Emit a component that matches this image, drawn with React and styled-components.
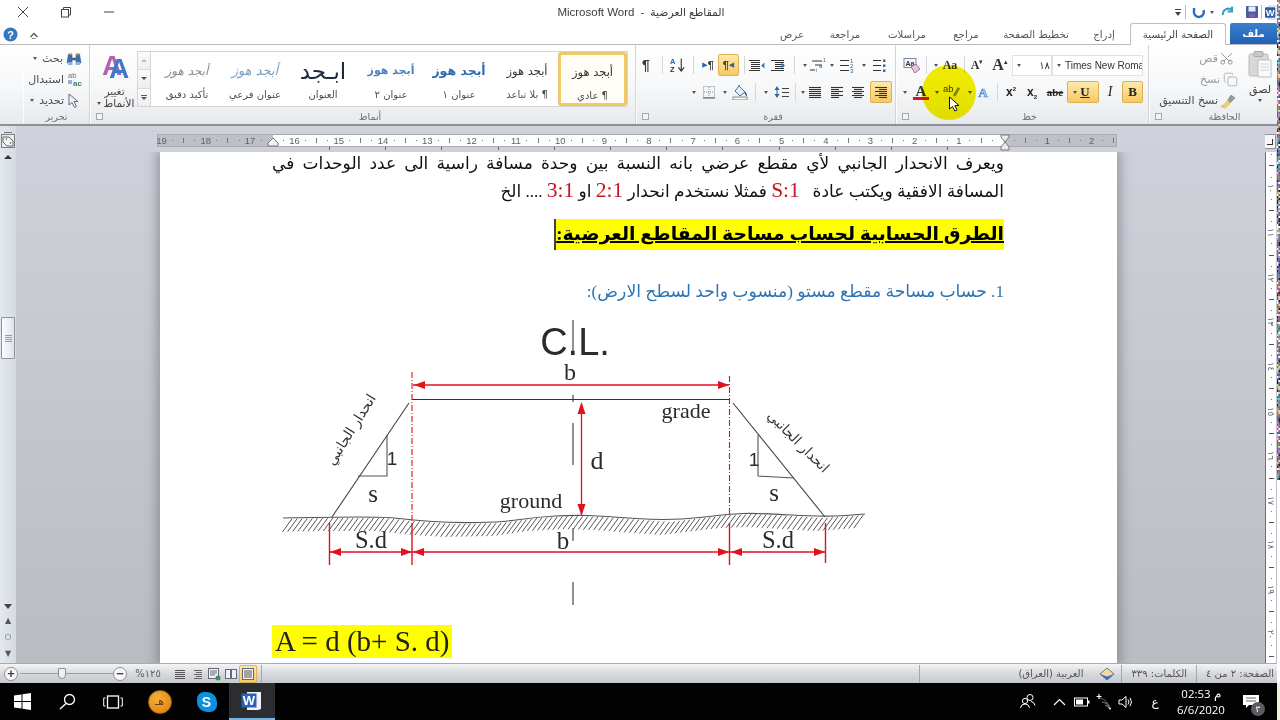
import React from 'react';
import styled, { createGlobalStyle } from 'styled-components';
import { Scissors, Copy } from 'lucide-react';

const Global = createGlobalStyle`
  html, body { margin: 0; padding: 0; background: #fff; }
  #root { width: 1280px; height: 720px; }
`;

const UI = `"DejaVu Sans", "Noto Sans", sans-serif`;
const SERIF = `"Liberation Serif", "DejaVu Sans", serif`;

const Shell = styled.div`
  position: relative; width: 1280px; height: 720px; overflow: hidden;
  display: flex; flex-direction: column; font-family: ${UI}; color: #444; background: #fff;
`;

/* ---------- title bar ---------- */
const TitleBar = styled.div`
  height: 24px; flex: none; display: grid; grid-template-columns: 1fr auto 1fr; align-items: center; background: #fff;
`;
const WinControls = styled.div`display: flex; padding-left: 1px;`;
const WinBtn = styled.div`width: 43px; display: flex; justify-content: center; align-items: center;`;
const TitleText = styled.div`
  display: flex; gap: 6px; align-items: center; font-size: 11.5px; color: #3c3c3c; margin-left: 2px;
  font-family: "Liberation Sans", "DejaVu Sans", sans-serif;
`;
const TitleDoc = styled.span`font-size: 10.8px; direction: rtl; white-space: nowrap;`;
const Qat = styled.div`display: flex; justify-content: flex-end; align-items: center; height: 24px;`;
const QatCell = styled.div`width: ${p => p.$w}px; display: flex; justify-content: center; align-items: center;`;
const QatBar = styled.div`width: 1px; height: 14px; background: #b5b7bb;`;

/* ---------- tabs ---------- */
const TabRow = styled.div`
  height: 21px; flex: none; display: flex; align-items: flex-end; justify-content: space-between;
  border-bottom: 1px solid #b8babd; box-sizing: border-box; background: #fff;
`;
const HelpArea = styled.div`display: flex; align-items: center; gap: 11px; padding: 0 0 2px 3px;`;
const Tabs = styled.div`display: flex; align-items: flex-end; padding-right: 3px;`;
const Tab = styled.div`
  height: 20px; display: flex; align-items: center; justify-content: center; box-sizing: border-box;
  width: ${p => p.$w}px; font-size: 10.2px; color: #555; white-space: nowrap;
`;
const ActiveTab = styled(Tab)`
  height: 22px; margin-bottom: -1px; background: #fff; border: 1px solid #bcbec2; border-bottom: 0;
  border-radius: 3px 3px 0 0; color: #444;
`;
const FileTab = styled(Tab)`
  height: 21px; margin-left: 4px; background: linear-gradient(#3a7fd0, #1f62b4); color: #fff; font-weight: bold;
  border-radius: 2px 2px 0 0;
`;

/* ---------- ribbon ---------- */
const Ribbon = styled.div`
  height: 81px; flex: none; display: flex; box-sizing: border-box; padding-left: 23px;
  background: linear-gradient(#ffffff 0%, #f6f7f8 55%, #e7e9ec 100%);
  border-bottom: 2px solid #8e9095;
`;
const Group = styled.div`
  width: ${p => p.$w}px; flex: none; display: flex; flex-direction: column; box-sizing: border-box;
  border-right: 1px solid #d2d4d8; border-left: 1px solid #fdfdfd;
`;
const GroupBody = styled.div`
  flex: 1; min-height: 0; display: flex; flex-direction: column; box-sizing: border-box;
  padding: ${p => p.$pad || '9px 0 0'}; gap: ${p => p.$gap || 0}px;
`;
const GroupFoot = styled.div`
  height: 15px; flex: none; display: grid; grid-template-columns: ${p => p.$cols || '16px 1fr 2px'}; align-items: center;
  font-size: 9.5px; color: #6c7079;
`;
const FootLabel = styled.div`text-align: center;`;
const Launcher = styled.div`
  width: 5px; height: 5px; margin-left: 5px; border: 1px solid #a5a8ae; background: #f3f4f6;
`;
const ToolRow = styled.div`display: flex; align-items: center; height: ${p => p.$h || 22}px; flex: none; padding-left: ${p => p.$pl || 0}px;`;
const TextRow = styled.div`
  display: flex; align-items: center; justify-content: flex-end; height: 21px; flex: none; gap: ${p => p.$g ?? 3}px;
  padding-right: ${p => p.$pr || 3}px; font-size: 11px; color: ${p => p.$muted ? '#9a9da3' : '#4a4d55'};
`;
const Gap = styled.div`width: ${p => p.$w}px; flex: none;`;
const Sep = styled.div`
  width: ${p => p.$w}px; flex: none; height: 20px; position: relative;
  &::after { content: ''; position: absolute; left: 50%; top: 1px; bottom: 1px; width: 1px; background: #d5d7db; }
`;
const Caret = styled.div`
  width: ${p => p.$w || 10}px; flex: none; height: 100%; display: flex; align-items: center; justify-content: center;
  &::after { content: ''; border: 2.5px solid transparent; border-top: 3px solid #555; border-bottom: 0; }
`;
const MiniCaret = styled(Caret)`width: 8px; height: 8px;`;
const Tool = styled.div`
  width: ${p => p.$w || 16}px; flex: none; height: 100%; display: flex; align-items: center; justify-content: center;
  font-size: 11px; color: #333; box-sizing: border-box;
  ${p => p.$on && `
    background: linear-gradient(#fdeaa9, #f8c863); border: 1px solid #dcb153; border-radius: 2px;
  `}
`;
const Pilcrow = styled.span`font: bold ${p => p.$s || 14}px "Liberation Sans", sans-serif; color: #3a3a3a;`;
const SmallArrow = styled.span`font-size: 7px; color: #2d63a8;`;

/* styles group */
const StylesBody = styled.div`flex: 1; min-height: 0; display: flex; padding: 6px 0 0 1px;`;
const ChangeStyles = styled.div`
  width: 45px; flex: none; display: flex; flex-direction: column; align-items: center; font-size: 10.5px; color: #444; line-height: 12px;
`;
const ChangeIcon = styled.div`height: 34px; display: flex; align-items: flex-start;`;
const InlineLabel = styled.div`display: flex; align-items: center; gap: 1px;`;
const GalleryScroll = styled.div`
  width: 13px; height: 56px; flex: none; display: flex; flex-direction: column; border: 1px solid #d2d4d8; border-right: 0; box-sizing: border-box;
`;
const ScrollCell = styled.div`
  flex: 1; display: flex; align-items: center; justify-content: center; flex-direction: column; gap: 1px;
  background: linear-gradient(#fafafa, #eceef0); border-bottom: 1px solid #d8dade;
  &:last-child { border-bottom: 0; }
`;
const ScrollTriangle = styled.div`
  border: 3px solid transparent; ${p => p.$up ? 'border-bottom: 3px solid #b9bbc0; border-top: 0;' : 'border-top: 3px solid #555; border-bottom: 0;'}
`;
const ScrollDash = styled.div`width: 6px; height: 1px; background: #555;`;
const Gallery = styled.div`
  flex: none; width: 478px; height: 56px; box-sizing: border-box; background: #fff; border: 1px solid #d2d4d8; display: flex; padding: 1px 1px 1px 2px;
`;
const StyleItem = styled.div`
  width: 68px; flex: none; box-sizing: border-box; display: flex; flex-direction: column; align-items: center; justify-content: flex-start; direction: rtl;
  padding-top: 1px;
  ${p => p.$on && `border: 2.5px solid #f4c95f; border-radius: 2px; box-shadow: 0 0 0 1px #e7c679; margin: 0 1px 0 -2px; width: 67px; padding-top: 0; background: #fffdf5;`}
`;
const StyleSample = styled.div`
  height: 33px; display: flex; align-items: center; justify-content: center; white-space: nowrap;
  font-size: ${p => p.$s || 11.5}px; font-weight: ${p => p.$b ? 'bold' : 'normal'}; font-style: ${p => p.$i ? 'italic' : 'normal'}; color: ${p => p.$c || '#333'};
`;
const StyleName = styled.div`font-size: 10px; color: #4b4e55; white-space: nowrap; margin-top: 2px;`;

/* font boxes */
const FieldBox = styled.div`
  width: ${p => p.$w}px; flex: none; height: 21px; box-sizing: border-box; border: 1px solid #dfe1e4; background: #fff;
  display: flex; align-items: center; justify-content: space-between; font-size: 10px; color: #333; padding: 0 1px 0 0; overflow: hidden; white-space: nowrap;
  font-family: "Liberation Sans", "DejaVu Sans", sans-serif;
`;
const BoldLetter = styled.span`font: bold 13px "Liberation Serif", serif; color: #222;`;
const ItalicLetter = styled.span`font: italic 14px "Liberation Serif", serif; color: #222;`;
const UnderLetter = styled.span`font: bold 13px "Liberation Serif", serif; color: #223; text-decoration: underline;`;
const StrikeLetter = styled.span`font: bold 11px "Liberation Serif", serif; color: #222; text-decoration: line-through;`;
const ScriptLetter = styled.span`font: bold 12px "Liberation Sans", sans-serif; color: #222; sup, sub { font-size: 6px; line-height: 0; }`;
const BigA = styled.span`font: bold ${p => p.$s}px "Liberation Serif", serif; color: #333; position: relative; sup { font: 7px sans-serif; line-height: 0; }`;

/* clipboard */
const ClipBody = styled.div`flex: 1; min-height: 0; display: flex;`;
const ClipText = styled.div`flex: 1; padding-top: 3px;`;
const PasteCol = styled.div`
  width: 34px; flex: none; margin-right: 2px; display: flex; flex-direction: column; align-items: center; padding-top: 5px; font-size: 11px; color: #444;
`;
const PasteLabel = styled.div`margin-top: 6px; line-height: 12px;`;
const UprightScissors = styled(Scissors)`transform: rotate(-90deg);`;

/* ---------- document ---------- */
const DocArea = styled.div`
  flex: 1; min-height: 0; display: grid; grid-template-columns: 16px 1fr 15px; 
  background: linear-gradient(#cfd2da, #b9bcc1);
`;
const VScroll = styled.div`
  display: flex; flex-direction: column; align-items: center; background: linear-gradient(90deg, #e3e7ee, #d6dae2);
`;
const ScrollMin = styled.div`width: 8px; height: 1px; background: #777; margin: 6px 0 1px;`;
const ViewRulerBtn = styled.div`
  width: 14px; height: 14px; border: 1px solid #7d7f84; background: #e8eaee; display: flex; align-items: center; justify-content: center; box-sizing: border-box;
`;
const ScrollUp = styled.div`
  margin-top: 7px; border: 4px solid transparent; border-bottom: 4px solid #333; border-top: 0;
`;
const ScrollThumb = styled.div`
  width: 14px; height: 42px; margin-top: 158px; box-sizing: border-box; border: 1px solid #8f9298; border-radius: 1px;
  background: linear-gradient(90deg, #fbfcfd, #dfe3ea); display: flex; align-items: center; justify-content: center;
`;
const Grip = styled.div`width: 7px; height: 7px; background: repeating-linear-gradient(#9a9da3 0 1px, transparent 1px 2px);`;
const ScrollDown = styled.div`
  margin-top: 245px; border: 4px solid transparent; border-top: 5px solid #444; border-bottom: 0;
`;
const BrowseBtn = styled.div`
  margin-top: ${p => p.$mt}px; height: 8px; display: flex; align-items: center; justify-content: center; font-size: 8px; color: #555; line-height: 8px;
`;
const CanvasCol = styled.div`display: flex; flex-direction: column; min-width: 0; min-height: 0;`;
const RulerBand = styled.div`height: 26px; flex: none; box-sizing: border-box; padding: 8px 0 0 141px;`;
const HRuler = styled.div`
  position: relative; width: 960px; height: 13px; box-sizing: border-box; border: 1px solid #a9acb2;
  background: linear-gradient(90deg, #bdc0c7 115px, #fdfdfd 115px, #fdfdfd 847px, #bdc0c7 847px);
  &::after {
    content: ''; position: absolute; left: 171px; right: 113px; bottom: -4px; height: 3px;
    background: repeating-linear-gradient(90deg, #666 0 1px, transparent 1px 56.2px);
  }
`;
const RulerTrack = styled.div`display: flex; margin-left: -2px; height: 100%; overflow: hidden;`;
const RulerCell = styled.div`
  width: 44.3px; flex: none; display: grid; grid-template-columns: repeat(4, 1fr); align-items: center; justify-items: center;
  font: 9.5px "Liberation Sans", sans-serif; color: #5f6267; line-height: 11px;
`;
const RulerDot = styled.div`width: 1px; height: 1px; background: #777;`;
const RulerTick = styled.div`width: 1px; height: 5px; background: #777;`;
const RulerMark = styled.svg`position: absolute; top: ${p => p.$t}px; left: ${p => p.$l}px; display: block; z-index: 1;`;
const PageArea = styled.div`flex: 1; min-height: 0; overflow: hidden; padding-left: 144px;`;
const Page = styled.div`
  width: 957px; height: 100%; box-sizing: border-box; background: #fff; padding: 0 113px 0 112px; overflow: hidden;
  box-shadow: 0 0 11px 3px rgba(70,70,78,.42);
`;
const Para = styled.p`
  margin: -2px 0 0; direction: rtl; font: 17px/28px ${SERIF}; color: #111; text-align: justify; text-align-last: right;
`;
const FirstLine = styled.span`display: block; text-align: justify; text-align-last: justify; white-space: nowrap;`;
const RedNum = styled.span`color: #c8141e; font: 21.5px "Liberation Serif", serif; unicode-bidi: isolate; direction: ltr;`;
const HeadingRow = styled.div`display: flex; justify-content: flex-end; margin-top: 13px;`;
const Heading = styled.h2`
  margin: 0; height: 31px; direction: rtl; background: #ffff00; color: #000; font: bold 18.8px/29px ${SERIF};
  text-decoration: underline; text-decoration-thickness: 2px; white-space: nowrap; border-left: 2px solid #444; padding-left: 0;
`;
const BlueLine = styled.p`
  margin: 28px 0 0; direction: rtl; font: 17.2px/28px ${SERIF}; color: #2e74b5;
`;
const Figure = styled.svg`display: block; margin: 14px 0 0 -2px;`;
const Formula = styled.div`
  display: inline-block; margin-top: 15px; height: 33px; background: #ffff00; font: 29px/33px ${SERIF}; color: #222; padding: 0 2px 0 3px; white-space: nowrap;
`;
const RightCol = styled.div`display: flex; flex-direction: column; min-height: 0; overflow: hidden;`;
const CornerBand = styled.div`height: 26px; flex: none; box-sizing: border-box; padding: 8px 3px 0 0;`;
const Corner = styled.div`
  width: 12px; height: 15px; margin-left: -1px; box-sizing: border-box; border: 1px solid #8f9298; background: #f6f6f8; display: flex; align-items: flex-end; justify-content: flex-end; padding: 0 2px 3px 0;
  &::after { content: ''; width: 5px; height: 5px; border-right: 1.5px solid #333; border-bottom: 1.5px solid #333; }
`;
const VRuler = styled.div`
  flex: 1; min-height: 0; width: 11px; box-sizing: border-box; border-left: 1px solid #6c6e73; background: #fff; overflow: hidden;
`;
const VTrack = styled.div`margin-top: -14px; display: flex; flex-direction: column;`;
const VCell = styled.div`
  height: 44.6px; flex: none; display: grid; grid-template-rows: repeat(4, 1fr); align-items: center; justify-items: center;
  font: 8.5px "DejaVu Sans", sans-serif; color: #5f6267;
`;
const VNum = styled.span`writing-mode: vertical-rl; line-height: 10px;`;
const VTick = styled.div`width: 5px; height: 1px; background: #555;`;

/* ---------- status bar ---------- */
const StatusBar = styled.div`
  height: 20px; flex: none; display: flex; justify-content: space-between; align-items: center; box-sizing: border-box;
  border-top: 1px solid #a9abb0; background: linear-gradient(#f3f4f6, #d5d7dc 55%, #c6c9cf); font-size: 10px; color: #555;
`;
const StatusSide = styled.div`display: flex; align-items: center; height: 100%;`;
const ZoomBtn = styled.div`
  width: 14px; height: 14px; border-radius: 50%; border: 1px solid #8e9095; background: #f8f8f9; box-sizing: border-box; 
  display: flex; align-items: center; justify-content: center; font: bold 13px/12px "Liberation Sans", sans-serif; color: #444; flex: none;
`;
const ZoomTrack = styled.div`width: 93px; height: 1px; background: #9b9da2; position: relative; flex: none;`;
const ZoomThumb = styled.div`
  position: absolute; left: 38px; top: -5px; width: 8px; height: 11px; background: #eef0f2; border: 1px solid #8a8c91; box-sizing: border-box;
  border-radius: 1px 1px 4px 4px;
`;
const ZoomPct = styled.div`width: 28px; margin-left: 7px; flex: none; text-align: center; font-size: 10px; color: #5a5d63;`;
const ViewBtn = styled(Tool)`height: 18px; width: ${p => p.$w || 17}px;`;
const StatusSepBar = styled.div`width: 1px; height: 18px; background: #a5a7ac; margin: 0 ${p => p.$m || 0}px;`;
const StatusText = styled.div`white-space: nowrap; direction: rtl; font-size: 10px; color: #555;`;

/* ---------- taskbar ---------- */
const TaskBar = styled.div`
  height: 37px; flex: none; background: #020203; display: flex; justify-content: space-between; align-items: stretch; color: #fff;
`;
const TaskSide = styled.div`display: flex; align-items: stretch;`;
const TaskCell = styled.div`
  width: ${p => p.$w || 45}px; flex: none; display: flex; align-items: center; justify-content: center; box-sizing: border-box; font-size: 12px;
  ${p => p.$active && `background: #2c2d30; border-bottom: 2px solid #77b4e6;`}
`;
const Clock = styled.div`
  width: 62px; display: flex; flex-direction: column; align-items: center; justify-content: center; font: 11.5px/16px "Open Sans", "Noto Sans", sans-serif; color: #fff;
`;
const OrangeDisc = styled.div`
  width: 22px; height: 22px; border-radius: 50%; background: radial-gradient(circle at 40% 35%, #f5b23a, #d97c10); color: #7a3b00; font-size: 11px;
  display: flex; align-items: center; justify-content: center; border: 1px solid #a86310;
`;
const SkypeBadge = styled.div`
  width: 20px; height: 20px; border-radius: 7px 10px 7px 10px; background: #0f90dc; color: #fff; font: bold 14px "Liberation Sans", sans-serif;
  display: flex; align-items: center; justify-content: center;
`;
const NotifyWrap = styled.div`position: relative; width: 16px; height: 14px;`;
const NotifyBadge = styled.div`
  position: absolute; left: 8px; top: 7px; width: 14px; height: 14px; border-radius: 50%; background: #5c5c60; color: #fff; font-size: 9px;
  display: flex; align-items: center; justify-content: center;
`;

/* ---------- overlays ---------- */
const Spotlight = styled.div`
  position: absolute; left: 922px; top: 65px; width: 54px; height: 55px; border-radius: 50%; background: #f4ef00; mix-blend-mode: multiply; z-index: 4;
`;
const PointerIcon = styled.svg`position: absolute; left: 948px; top: 96px; z-index: 5; display: block;`;
const NoiseStrip = styled.svg`position: absolute; right: 0; top: 0; z-index: 6; display: block;`;

const Ar = styled.span`direction: rtl; unicode-bidi: isolate; white-space: nowrap;`;

/* ---------- icons ---------- */
const S = ({ w = 16, h = 16, children, style }) => <svg width={w} height={h} viewBox={`0 0 ${w} ${h}`} style={{ display: 'block', ...style }}>{children}</svg>;
const Lines = ({ ys, x1 = 2, widths, c = '#444', x2 = 14 }) => <>{ys.map((y, i) => <line key={i} x1={widths ? x2 - widths[i] : x1} x2={x2} y1={y} y2={y} stroke={c} strokeWidth="1" />)}</>;

const AlignIcon = ({ kind }) => {
  const ys = [3.5, 5.5, 7.5, 9.5, 11.5, 13.5];
  return <S>{ys.map((y, i) => {
    const short = i % 2 === 1;
    const len = kind === 'j' ? 12 : short ? 8 : 12;
    const x = kind === 'l' ? 2 : kind === 'r' ? 14 - len : 8 - len / 2;
    return <line key={i} x1={x} x2={x + len} y1={y} y2={y} stroke="#333" strokeWidth="1.1" />;
  })}</S>;
};
const IndentIcon = ({ inc }) => (
  <S>
    <Lines ys={[3.5, 5.5, 7.5, 9.5, 11.5, 13.5]} widths={[13, 9, 9, 9, 9, 13]} x2={inc ? 14 : 11} c="#333" />
    <path d={inc ? 'M15 8.5 L11.5 5.5 V11.5 Z' : 'M12 8.5 L15.5 5.5 V11.5 Z'} fill="#3f78bf" />
  </S>
);
const MultiIcon = () => (
  <S w={18}>
    <line x1="4" x2="14" y1="4" y2="4" stroke="#333" /><line x1="7" x2="14" y1="8" y2="8" stroke="#333" /><line x1="2" x2="7" y1="13" y2="13" stroke="#333" />
    <text x="15" y="5" fontSize="5" fill="#2d63a8" fontFamily="Liberation Sans">1</text>
    <text x="11" y="11" fontSize="6" fill="#2d63a8" fontFamily="Liberation Sans">a</text>
    <text x="8" y="15" fontSize="5" fill="#2d63a8" fontFamily="Liberation Sans">i</text>
  </S>
);
const NumIcon = () => (
  <S>
    <Lines ys={[3.5, 8.5, 13.5]} widths={[9, 9, 9]} x2={10} c="#333" />
    <text x="11" y="6" fontSize="6" fill="#2d63a8" fontFamily="Liberation Sans">1</text>
    <text x="11" y="11" fontSize="6" fill="#2d63a8" fontFamily="Liberation Sans">2</text>
    <text x="11" y="16" fontSize="6" fill="#2d63a8" fontFamily="Liberation Sans">3</text>
  </S>
);
const BulletIcon = () => (
  <S>
    <Lines ys={[3.5, 8.5, 13.5]} widths={[8, 8, 8]} x2={9} c="#333" />
    {[3.5, 8.5, 13.5].map(y => <rect key={y} x="11" y={y - 1} width="2.4" height="2.4" fill="#2d63a8" />)}
  </S>
);
const SortIcon = () => (
  <S w={16}>
    <text x="0" y="7" fontSize="8" fontWeight="bold" fill="#2d63a8" fontFamily="Liberation Sans">A</text>
    <text x="0" y="15" fontSize="8" fontWeight="bold" fill="#333" fontFamily="Liberation Sans">Z</text>
    <path d="M12 1 V14 M9 10.5 L12 14.5 L15 10.5" stroke="#333" fill="none" strokeWidth="1.2" />
  </S>
);
const BorderIcon = () => (
  <S>
    <rect x="2.5" y="2.5" width="11" height="11" fill="none" stroke="#8b8e94" strokeDasharray="1 1" />
    <path d="M8 3 V13 M3 8 H13" stroke="#8b8e94" strokeDasharray="1 1" />
    <line x1="2" x2="14" y1="14" y2="14" stroke="#555" />
  </S>
);
const ShadingIcon = () => (
  <S w={18}>
    <path d="M8 2 L14 8 L9 12 L4 7 Z" fill="#e8eef6" stroke="#4b6e9b" />
    <path d="M8 2 V0.8 M14 8 Q16 10 15.5 11.8 Q14 11 14 8" stroke="#2d63a8" fill="#2d63a8" />
    <rect x="2" y="13" width="14" height="3" fill="#f4f4f2" stroke="#8a8c8f" />
  </S>
);
const SpacingIcon = () => (
  <S w={18}>
    <path d="M5 2 L2.5 6 H7.5 Z M5 14 L2.5 10 H7.5 Z" fill="#2d63a8" />
    <line x1="5" x2="5" y1="5" y2="11" stroke="#2d63a8" />
    <Lines ys={[4.5, 8.5, 12.5]} widths={[7, 7, 7]} x2={17} c="#444" />
  </S>
);
const AIcon = ({ c1 = '#333', bar, blue }) => (
  <S w={18}>
    <text x="9" y={bar ? 12 : 14} textAnchor="middle" fontFamily="Liberation Serif" fontWeight="bold" fontSize="15" fill={blue ? '#a9d0ee' : c1} stroke={blue ? '#4a90d0' : 'none'} strokeWidth={blue ? .7 : 0}>A</text>
    {bar && <rect x="1" y="13" width="16" height="3" fill="#e20f2b" />}
  </S>
);
const HighlightIcon = () => (
  <S w={18}>
    <text x="0" y="8" fontFamily="Liberation Sans" fontSize="9.5" fill="#2d3fb0">ab</text>
    <path d="M10 11 L15 3 L17 4.5 L12 13 Z" fill="#7a8a9a" />
    <rect x="1" y="12.5" width="13" height="3" fill="#f3ea00" />
  </S>
);
const ClearIcon = () => (
  <S w={18}>
    <rect x="1" y="1.5" width="12" height="9" fill="#f3f6fb" stroke="#7d8aa0" />
    <text x="2.5" y="8.5" fontSize="7" fontWeight="bold" fill="#333" fontFamily="Liberation Sans">Aa</text>
    <path d="M8 10 L13 7 L17 12 L12 16 Z" fill="#e8c6da" stroke="#9a6f92" />
  </S>
);
const Binoculars = () => (
  <S w={16}>
    <path d="M2.5 3 h3.5 v4 h4 v-4 h3.5 l1.5 9 h-5 v-3 h-4 v3 h-5 z" fill="#3e6fa8" stroke="#274d7c" strokeWidth=".5" />
    <rect x="3.5" y="2" width="2.5" height="2" fill="#d7a94a" /><rect x="10" y="2" width="2.5" height="2" fill="#d7a94a" />
    <rect x="2" y="11" width="4.5" height="3" fill="#8fb4dc" /><rect x="9.5" y="11" width="4.5" height="3" fill="#8fb4dc" />
  </S>
);
const ReplaceIcon = () => (
  <S w={17} h={16}>
    <text x="1" y="6" fontSize="7.5" fill="#6b6e74" fontFamily="Liberation Sans">ab</text>
    <text x="6" y="14" fontSize="8" fontWeight="bold" fill="#3f7f6a" fontFamily="Liberation Sans">ac</text>
    <rect x="1" y="8" width="4" height="4" fill="#8fb4dc" />
  </S>
);
const ArrowCursor = () => (
  <S w={14} h={16}><path d="M2 1 L2 12 L5 9.5 L7.5 14.5 L9.5 13.5 L7 8.5 L11 8.5 Z" fill="#f1f3f7" stroke="#5f6d85" /></S>
);
const PasteIcon = () => (
  <svg width="28" height="28" viewBox="0 0 28 28" style={{ display: 'block' }}>
    <rect x="3" y="4" width="19" height="22" rx="1.5" fill="#d8d9d7" stroke="#b9bab8" />
    <rect x="8" y="1.5" width="9" height="5" rx="1" fill="#c9c9c7" stroke="#a9aaa8" />
    <path d="M12 10 H25 V27 H12 Z" fill="#fafafa" stroke="#bbbdbf" />
    <path d="M14.5 14H23M14.5 17H23M14.5 20H23" stroke="#ccced1" />
  </svg>
);
const BrushIcon = () => (
  <S w={18}>
    <path d="M12 2 L16 5 L11 10 L8.5 7.5 Z" fill="#8e9aa8" stroke="#6b7684" strokeWidth=".5" />
    <path d="M9 7 L11.5 10 L6 15 L2 13.5 Q6 12 9 7 Z" fill="#f1d264" stroke="#b9952f" strokeWidth=".5" />
  </S>
);
const WordGlyph = ({ s = 16 }) => (
  <svg width={s} height={s} viewBox="0 0 16 16" style={{ display: 'block' }}>
    <rect x="4" y="1" width="11" height="14" fill="#fff" stroke="#9bb6d8" strokeWidth=".7" />
    <path d="M6 4H14M6 6.5H14M6 9H14M6 11.5H14" stroke="#bcd0e8" strokeWidth=".7" />
    <rect x="0" y="2.5" width="11" height="11" fill="#2a5ea8" rx=".7" />
    <text x="5.5" y="11.5" textAnchor="middle" fontFamily="Liberation Sans" fontWeight="bold" fontSize="10" fill="#fff">W</text>
  </svg>
);
const WordTask = () => (
  <svg width="22" height="22" viewBox="0 0 22 22" style={{ display: 'block' }}>
    <path d="M6 2 H20 V19 L17 20 H6 Z" fill="#f2f3f5" />
    <rect x="0.5" y="3.5" width="15" height="14" fill="#2a62b6" />
    <text x="8" y="15" textAnchor="middle" fontFamily="Liberation Sans" fontWeight="bold" fontSize="13" fill="#fff">W</text>
  </svg>
);

const dropdownRow = (
  <S w={8} h={9}><line x1="1" x2="7" y1="1.5" y2="1.5" stroke="#444" /><path d="M1 4 H7 L4 8 Z" fill="#444" /></S>
);

/* ---------- the figure ---------- */
const RED = '#e3101c';
const PROFILE = [[283, 518], [330, 517], [387, 517], [412, 520], [453, 523], [503, 522], [537, 517], [573, 515], [603, 516], [670, 521], [729, 514], [757, 513], [825, 517], [865, 514]];
const groundAt = x => {
  for (let i = 1; i < PROFILE.length; i++) {
    const [x0, y0] = PROFILE[i - 1], [x1, y1] = PROFILE[i];
    if (x <= x1) return y0 + (y1 - y0) * (x - x0) / (x1 - x0);
  }
  return 514;
};
const smoothProfile = () => {
  let d = `M${PROFILE[0][0]} ${PROFILE[0][1]}`;
  for (let i = 1; i < PROFILE.length - 1; i++) {
    const [x, y] = PROFILE[i], [nx, ny] = PROFILE[i + 1];
    d += ` Q${x} ${y} ${(x + nx) / 2} ${(y + ny) / 2}`;
  }
  const last = PROFILE[PROFILE.length - 1];
  return `${d} L${last[0]} ${last[1]}`;
};
const hatch = [];
for (let x = 292; x < 866; x += 5.1) hatch.push(x);

const Arrow = ({ x, y, dir }) => {
  const d = { l: `${x},${y} ${x + 11},${y - 4} ${x + 11},${y + 4}`, r: `${x},${y} ${x - 11},${y - 4} ${x - 11},${y + 4}`, u: `${x},${y} ${x - 4},${y + 12} ${x + 4},${y + 12}`, d: `${x},${y} ${x - 4},${y - 12} ${x + 4},${y - 12}` }[dir];
  return <polygon points={d} fill={RED} />;
};
const Lbl = ({ x, y, s = 22, sans, anchor = 'middle', children }) => (
  <text x={x} y={y} fontSize={s} textAnchor={anchor} fontFamily={sans ? 'Liberation Sans' : 'Liberation Serif'} fill="#2b2b2b">{children}</text>
);
const RoadFigure = () => (
  <Figure width="620" height="290" viewBox="270 320 620 290">
    <path d="M573 320 V355 M573 395 V402 M573 423 V465 M573 528 V541 M573 582 V605" stroke="#6d6d6d" strokeWidth="1.5" fill="none" />
    <Lbl x={575} y={355} s={38} sans>C.L.</Lbl>
    <Lbl x={570} y={380} s={24}>b</Lbl>
    <line x1="413" x2="729" y1="385" y2="385" stroke={RED} strokeWidth="1.3" />
    <Arrow x={414} y={385} dir="l" /><Arrow x={729} y={385} dir="r" />
    <path d="M412 372 V523 M729.5 376 V515" stroke={RED} strokeWidth="1.1" strokeDasharray="6 2 1 2" fill="none" />
    <line x1="412" x2="730" y1="399.5" y2="399.5" stroke="#333" strokeWidth="1.2" />
    <line x1="409" y1="403" x2="332" y2="517" stroke="#444" strokeWidth="1.1" />
    <line x1="733" y1="403" x2="825" y2="517" stroke="#444" strokeWidth="1.1" />
    <path d="M387 435 V476 H358" stroke="#555" strokeWidth="1.1" fill="none" />
    <path d="M758 435 V476 L794 478" stroke="#555" strokeWidth="1.1" fill="none" />
    <Lbl x={392} y={465} s={19} sans>1</Lbl>
    <Lbl x={754} y={466} s={19} sans>1</Lbl>
    <Lbl x={373} y={502} s={25}>s</Lbl>
    <Lbl x={774} y={501} s={25}>s</Lbl>
    <Lbl x={686} y={418} s={22}>grade</Lbl>
    <Lbl x={531} y={508} s={22}>ground</Lbl>
    <Lbl x={597} y={469} s={26}>d</Lbl>
    <line x1="581.5" x2="581.5" y1="404" y2="514" stroke={RED} strokeWidth="1.3" />
    <Arrow x={581.5} y={402} dir="u" /><Arrow x={581.5} y={516} dir="d" />
    {hatch.map(x => { const y = groundAt(x); return <line key={x} x1={x} y1={y + 1} x2={x - 9.5} y2={y + 14} stroke="#555" strokeWidth="1" />; })}
    <path d={smoothProfile()} fill="none" stroke="#555" strokeWidth="1.1" />
    <path d="M329.5 523 V565 M412 523 V565 M729.5 523 V565 M825.5 523 V563" stroke={RED} strokeWidth="1.4" fill="none" />
    <path d="M330 552 H825" stroke={RED} strokeWidth="1.3" fill="none" />
    <Arrow x={330} y={552} dir="l" /><Arrow x={412} y={552} dir="r" />
    <Arrow x={413} y={552} dir="l" /><Arrow x={729} y={552} dir="r" />
    <Arrow x={731} y={552} dir="l" /><Arrow x={825} y={552} dir="r" />
    <Lbl x={371} y={548} s={24.5}>S.d</Lbl>
    <Lbl x={563} y={549} s={25}>b</Lbl>
    <Lbl x={778} y={548} s={24.5}>S.d</Lbl>
    <text transform="rotate(-58 355 432)" x="355" y="432" textAnchor="middle" direction="rtl" fontSize="14" fontFamily="DejaVu Sans" fill="#333">انحدار الجانبي</text>
    <text transform="rotate(45 795 445)" x="795" y="445" textAnchor="middle" direction="rtl" fontSize="14" fontFamily="DejaVu Sans" fill="#333">انحدار الجانبي</text>
  </Figure>
);

/* ---------- noise ---------- */
const NOISE_COLORS = ['#d63a8f', '#3aa04d', '#f0e23a', '#3a55d6', '#ffffff', '#222222', '#c9663a', '#8a4fd0', '#49c9c4'];
const noise = [];
let seed = 17;
for (let y = 0; y < 480; y += 2) for (let x = 0; x < 3; x += 1.5) {
  seed = (seed * 131 + 7) % 1009;
  noise.push({ x, y, c: NOISE_COLORS[seed % NOISE_COLORS.length] });
}

const HNUMS = [19, 18, 17, 16, 15, 14, 13, 12, 11, 10, 9, 8, 7, 6, 5, 4, 3, 2, 1, '', 1, 2];
const VNUMS = ['', '١٠', '١١', '١٢', '١٣', '١٤', '١٥', '١٦', '١٧', '١٨', '١٩', '٢٠'];

export default function App() {
  return (
    <Shell>
      <Global />
      <TitleBar>
        <WinControls>
          <WinBtn><S w={14} h={14}><path d="M2 2 L12 12 M12 2 L2 12" stroke="#444" strokeWidth="1" /></S></WinBtn>
          <WinBtn><S w={12} h={12}><rect x="1.5" y="3.5" width="7" height="7.5" fill="#fff" stroke="#444" /><path d="M3.5 3 V1.5 H10.5 V9 H9" fill="none" stroke="#444" /></S></WinBtn>
          <WinBtn><S w={12} h={4}><line x1="1" x2="11" y1="2" y2="2" stroke="#444" /></S></WinBtn>
        </WinControls>
        <TitleText><span>Microsoft Word</span><span>-</span><TitleDoc>المقاطع العرضية</TitleDoc></TitleText>
        <Qat>
          <QatCell $w={14}>{dropdownRow}</QatCell>
          <QatBar />
          <Gap $w={4} />
          <QatCell $w={16}><S w={15} h={15}><path d="M3 3 V8 A5 5 0 1 0 12.5 5" fill="none" stroke="#2d6cb8" strokeWidth="2.4" /></S></QatCell>
          <QatCell $w={12}><MiniCaret /></QatCell>
          <QatCell $w={16}><S w={15} h={15}><path d="M4 10 A5.5 5.5 0 0 1 13 5 M13 1.5 V6.5 H8.5" fill="none" stroke="#39a0c2" strokeWidth="2.2" /></S></QatCell>
          <Gap $w={10} />
          <QatCell $w={16}><S w={14} h={14}><rect x="1" y="1" width="12" height="12" rx="1" fill="#3e5fa6" /><rect x="3.5" y="1.5" width="7" height="5" fill="#e8eef8" /><rect x="4" y="8.5" width="6" height="4" fill="#8a5a9f" /></S></QatCell>
          <Gap $w={1} />
          <QatBar />
          <Gap $w={2} />
          <QatCell $w={16}><WordGlyph s={15} /></QatCell>
        </Qat>
      </TitleBar>

      <TabRow>
        <HelpArea>
          <S w={15} h={15}><circle cx="7.5" cy="7.5" r="7" fill="#3478c4" /><text x="7.5" y="11.5" textAnchor="middle" fontSize="11" fontWeight="bold" fill="#fff" fontFamily="Liberation Sans">?</text></S>
          <S w={10} h={8}><path d="M1.5 6 L5 2.5 L8.5 6" fill="none" stroke="#555" strokeWidth="1.3" /><path d="M3 7.5 H7" stroke="#999" /></S>
        </HelpArea>
        <Tabs>
          <Tab $w={44}>عرض</Tab>
          <Tab $w={62}><Ar>مراجعة</Ar></Tab>
          <Tab $w={62}>مراسلات</Tab>
          <Tab $w={56}>مراجع</Tab>
          <Tab $w={84}>تخطيط الصفحة</Tab>
          <Tab $w={52}>إدراج</Tab>
          <ActiveTab $w={96}>الصفحة الرئيسية</ActiveTab>
          <FileTab $w={47}>ملف</FileTab>
        </Tabs>
      </TabRow>

      <Ribbon>
        <Group $w={67}>
          <GroupBody $pad="3px 0 0">
            <TextRow $pr={7}><MiniCaret /><Ar>بحث</Ar><Binoculars /></TextRow>
            <TextRow $pr={5}><Ar>استبدال</Ar><ReplaceIcon /></TextRow>
            <TextRow $pr={8}><MiniCaret /><Ar>تحديد</Ar><ArrowCursor /></TextRow>
          </GroupBody>
          <GroupFoot $cols="1fr"><FootLabel>تحرير</FootLabel></GroupFoot>
        </Group>

        <Group $w={546}>
          <StylesBody>
            <ChangeStyles>
              <ChangeIcon>
                <S w={36} h={34}>
                  <text x="15" y="24" textAnchor="middle" fontFamily="Liberation Sans" fontWeight="bold" fontSize="28" fill="#b45fb5">A</text>
                  <text x="22" y="27" textAnchor="middle" fontFamily="Liberation Sans" fontWeight="bold" fontSize="28" fill="#3f78c9">A</text>
                </S>
              </ChangeIcon>
              <Ar>تغيير</Ar>
              <InlineLabel><MiniCaret /><Ar>الأنماط</Ar></InlineLabel>
            </ChangeStyles>
            <GalleryScroll>
              <ScrollCell><ScrollTriangle $up /></ScrollCell>
              <ScrollCell><ScrollTriangle /></ScrollCell>
              <ScrollCell><ScrollDash /><ScrollTriangle /></ScrollCell>
            </GalleryScroll>
            <Gallery>
              <StyleItem><StyleSample $i $c="#8a8a8a" $s={12}>أبجد هوز</StyleSample><StyleName>تأكيد دقيق</StyleName></StyleItem>
              <StyleItem><StyleSample $i $c="#7d9dc0" $s={13}>أبجد هوز</StyleSample><StyleName>عنوان فرعي</StyleName></StyleItem>
              <StyleItem><StyleSample $c="#1d2b3f" $s={23}>ابـجد</StyleSample><StyleName>العنوان</StyleName></StyleItem>
              <StyleItem><StyleSample $b $c="#4f81bd" $s={11}>أبجد هوز</StyleSample><StyleName>عنوان ٢</StyleName></StyleItem>
              <StyleItem><StyleSample $b $c="#2f6bb0" $s={12.5}>أبجد هوز</StyleSample><StyleName>عنوان ١</StyleName></StyleItem>
              <StyleItem><StyleSample>أبجد هوز</StyleSample><StyleName>¶ بلا تباعد</StyleName></StyleItem>
              <StyleItem $on><StyleSample>أبجد هوز</StyleSample><StyleName>¶ عادي</StyleName></StyleItem>
            </Gallery>
          </StylesBody>
          <GroupFoot><Launcher /><FootLabel>أنماط</FootLabel><span /></GroupFoot>
        </Group>

        <Group $w={260}>
          <GroupBody $gap={5}>
            <ToolRow $pl={1}>
              <Tool $w={16}><Pilcrow>¶</Pilcrow></Tool>
              <Sep $w={16} />
              <Tool $w={15}><SortIcon /></Tool>
              <Sep $w={16} />
              <Tool $w={14}><SmallArrow>▶</SmallArrow><Pilcrow $s={11}>¶</Pilcrow></Tool>
              <Gap $w={3} />
              <Tool $w={21} $on><Pilcrow $s={11}>¶</Pilcrow><SmallArrow>◀</SmallArrow></Tool>
              <Sep $w={10} />
              <Tool $w={16}><IndentIcon /></Tool>
              <Gap $w={5} />
              <Tool $w={16}><IndentIcon inc /></Tool>
              <Sep $w={16} />
              <Caret $w={6} /><Tool $w={18}><MultiIcon /></Tool>
              <Caret $w={12} /><Tool $w={18}><NumIcon /></Tool>
              <Caret $w={16} /><Tool $w={16}><BulletIcon /></Tool>
            </ToolRow>
            <ToolRow $pl={52}>
              <Caret $w={10} />
              <Gap $w={2} />
              <Tool $w={16}><BorderIcon /></Tool>
              <Gap $w={3} />
              <Caret $w={10} />
              <Gap $w={1} />
              <Tool $w={18}><ShadingIcon /></Tool>
              <Sep $w={12} />
              <Caret $w={10} />
              <Gap $w={1} />
              <Tool $w={18}><SpacingIcon /></Tool>
              <Sep $w={9} />
              <Caret $w={8} />
              <Tool $w={16}><AlignIcon kind="j" /></Tool>
              <Gap $w={6} />
              <Tool $w={16}><AlignIcon kind="l" /></Tool>
              <Gap $w={5} />
              <Tool $w={16}><AlignIcon kind="c" /></Tool>
              <Gap $w={4} />
              <Tool $w={22} $on><AlignIcon kind="r" /></Tool>
            </ToolRow>
          </GroupBody>
          <GroupFoot><Launcher /><FootLabel>فقرة</FootLabel><span /></GroupFoot>
        </Group>

        <Group $w={253}>
          <GroupBody $gap={5}>
            <ToolRow $pl={6}>
              <Tool $w={18}><ClearIcon /></Tool>
              <Sep $w={10} />
              <Caret $w={10} />
              <Tool $w={18}><BigA $s={12}>Aa</BigA></Tool>
              <Sep $w={10} />
              <Tool $w={16}><BigA $s={12}>A<sup>▾</sup></BigA></Tool>
              <Gap $w={6} />
              <Tool $w={18}><BigA $s={16}>A<sup>▴</sup></BigA></Tool>
              <Gap $w={3} />
              <FieldBox $w={40}><Caret $w={12} /><span>١٨</span></FieldBox>
              <FieldBox $w={91}><Caret $w={12} /><span>Times New Roma</span></FieldBox>
            </ToolRow>
            <ToolRow $pl={3}>
              <Caret $w={10} />
              <Gap $w={2} />
              <Tool $w={18}><AIcon bar /></Tool>
              <Gap $w={2} />
              <Caret $w={10} />
              <Tool $w={20}><HighlightIcon /></Tool>
              <Gap $w={3} />
              <Caret $w={10} />
              <Tool $w={16}><AIcon blue /></Tool>
              <Sep $w={12} />
              <Tool $w={16}><ScriptLetter>x<sup>2</sup></ScriptLetter></Tool>
              <Gap $w={5} />
              <Tool $w={16}><ScriptLetter>x<sub>2</sub></ScriptLetter></Tool>
              <Gap $w={4} />
              <Tool $w={22}><StrikeLetter>abe</StrikeLetter></Tool>
              <Gap $w={1} />
              <Tool $w={32} $on><Caret $w={10} /><UnderLetter>U</UnderLetter><Gap $w={6} /></Tool>
              <Gap $w={3} />
              <Tool $w={16}><ItalicLetter>I</ItalicLetter></Tool>
              <Gap $w={4} />
              <Tool $w={21} $on><BoldLetter>B</BoldLetter></Tool>
            </ToolRow>
          </GroupBody>
          <GroupFoot><Launcher /><FootLabel>خط</FootLabel><span /></GroupFoot>
        </Group>

        <Group $w={131}>
          <ClipBody>
            <ClipText>
              <TextRow $muted $pr={9} $g={1}><Ar>قص</Ar><UprightScissors size={15} color="#85888e" strokeWidth={1.4} /></TextRow>
              <TextRow $muted $pr={5}><Ar>نسخ</Ar><Copy size={15} color="#a0a3a8" strokeWidth={1.2} /></TextRow>
              <TextRow $pr={6} $g={1}><Ar>نسخ التنسيق</Ar><BrushIcon /></TextRow>
            </ClipText>
            <PasteCol>
              <PasteIcon />
              <PasteLabel>لصق</PasteLabel>
              <MiniCaret />
            </PasteCol>
          </ClipBody>
          <GroupFoot $cols="36px 1fr 16px"><Launcher /><FootLabel>الحافظة</FootLabel><span /></GroupFoot>
        </Group>
      </Ribbon>

      <DocArea>
        <VScroll>
          <ScrollMin />
          <ViewRulerBtn>
            <S w={12} h={12}><path d="M1 2 H7 L11 6 V11 H5 L1 7 Z" fill="#f3f4f6" stroke="#666" /><path d="M5 3 L4 5 M9 7 L8 9" stroke="#666" /></S>
          </ViewRulerBtn>
          <ScrollUp />
          <ScrollThumb><Grip /></ScrollThumb>
          <ScrollDown />
          <BrowseBtn $mt={8}>▲</BrowseBtn>
          <BrowseBtn $mt={8}>○</BrowseBtn>
          <BrowseBtn $mt={9}>▼</BrowseBtn>
        </VScroll>

        <CanvasCol>
          <RulerBand>
            <HRuler>
              <RulerTrack>
                {HNUMS.map((n, i) => (
                  <RulerCell key={i}>
                    <span>{n}</span><RulerDot /><RulerTick /><RulerDot />
                  </RulerCell>
                ))}
              </RulerTrack>
              <RulerMark $l={109} $t={2} width="12" height="10" viewBox="0 0 12 10"><path d="M1 9 V6 L6 1 L11 6 V9 Z" fill="#f2f3f5" stroke="#777" /></RulerMark>
              <RulerMark $l={841} $t={-1} width="12" height="17" viewBox="0 0 12 17"><path d="M2 1 H10 V3 L6 8 L10 13 V16 H2 V13 L6 8 L2 3 Z" fill="#e9eaec" stroke="#777" /></RulerMark>
            </HRuler>
          </RulerBand>
          <PageArea>
            <Page>
              <Para>
                <FirstLine>ويعرف الانحدار الجانبي لأي مقطع عرضي بانه النسبة بين وحدة مسافة راسية الى عدد الوحدات في</FirstLine>
                المسافة الافقية ويكتب عادة&nbsp;&nbsp; <RedNum>S:1</RedNum> فمثلا نستخدم انحدار <RedNum>2:1</RedNum> او <RedNum>3:1</RedNum> .... الخ
              </Para>
              <HeadingRow><Heading>الطرق الحسابية لحساب مساحة المقاطع العرضية:</Heading></HeadingRow>
              <BlueLine>1. حساب مساحة مقطع مستو (منسوب واحد لسطح الارض):</BlueLine>
              <RoadFigure />
              <Formula>A = d (b+ S. d)</Formula>
            </Page>
          </PageArea>
        </CanvasCol>

        <RightCol>
          <CornerBand><Corner /></CornerBand>
          <VRuler>
            <VTrack>
              {VNUMS.map((n, i) => (
                <VCell key={i}><VNum>{n}</VNum><RulerDot /><VTick /><RulerDot /></VCell>
              ))}
            </VTrack>
          </VRuler>
        </RightCol>
      </DocArea>

      <StatusBar>
        <StatusSide>
          <Gap $w={4} />
          <ZoomBtn>+</ZoomBtn>
          <Gap $w={2} />
          <ZoomTrack><ZoomThumb /></ZoomTrack>
          <ZoomBtn>−</ZoomBtn>
          <ZoomPct>%١٢٥</ZoomPct>
          <Gap $w={9} />
          <ViewBtn><S w={12} h={12}><path d="M1 2.5H11M1 4.5H11M1 6.5H11M1 8.5H11M1 10.5H11" stroke="#555" /></S></ViewBtn>
          <ViewBtn><S w={12} h={12}><path d="M3 2.5H11M5 4.5H11M3 6.5H11M5 8.5H11M3 10.5H11" stroke="#666" /></S></ViewBtn>
          <ViewBtn><S w={14} h={14}><rect x="1.5" y="1.5" width="10" height="10" fill="#eef1f5" stroke="#667" /><path d="M3 4H10M3 6H10M3 8H8" stroke="#667" /><circle cx="11" cy="11" r="2.5" fill="#3b8f60" /></S></ViewBtn>
          <ViewBtn><S w={14} h={14}><rect x="1.5" y="2.5" width="5" height="9" fill="#eef1f5" stroke="#667" /><rect x="7.5" y="2.5" width="5" height="9" fill="#eef1f5" stroke="#667" /></S></ViewBtn>
          <ViewBtn $on $w={18}><S w={12} h={14}><rect x=".5" y="1.5" width="11" height="11" fill="#f3f3f0" stroke="#667" /><path d="M2 4H10M2 6H10M2 8H10M2 10H10" stroke="#555" /></S></ViewBtn>
          <StatusSepBar $m={4} />
        </StatusSide>
        <StatusSide>
          <StatusSepBar />
          <Gap $w={98} />
          <StatusText>العربية (العراق)</StatusText>
          <Gap $w={16} />
          <S w={16} h={14}><path d="M8 1 L15 7 L8 13 L1 7 Z" fill="#f4d9a4" stroke="#777" /><path d="M1 7 L8 13 L15 7 L8 9.5 Z" fill="#3a6fb0" /></S>
          <Gap $w={6} />
          <StatusSepBar />
          <Gap $w={9} />
          <StatusText>الكلمات: ٣٣٩</StatusText>
          <Gap $w={9} />
          <StatusSepBar />
          <Gap $w={9} />
          <StatusText>الصفحة: ٢ من ٤</StatusText>
          <Gap $w={6} />
        </StatusSide>
      </StatusBar>

      <TaskBar>
        <TaskSide>
          <TaskCell $w={45}><S w={17} h={17}><path d="M0 2.5 L7.5 1.4 V8 H0 Z M8.5 1.2 L17 0 V8 H8.5 Z M0 9 H7.5 V15.6 L0 14.5 Z M8.5 9 H17 V17 L8.5 15.8 Z" fill="#fff" /></S></TaskCell>
          <TaskCell $w={45}><S w={17} h={17}><circle cx="10.5" cy="6.5" r="5" fill="none" stroke="#fff" strokeWidth="1.3" /><path d="M7 10.5 L1 16" stroke="#fff" strokeWidth="1.4" /></S></TaskCell>
          <TaskCell $w={45}><S w={20} h={14}><rect x="4.5" y="1" width="11" height="12" fill="none" stroke="#fff" strokeWidth="1.3" /><path d="M2.5 3 H.7 V11 H2.5 M17.5 3 H19.3 V11 H17.5" fill="none" stroke="#fff" /></S></TaskCell>
          <TaskCell $w={49}><OrangeDisc>هـ</OrangeDisc></TaskCell>
          <TaskCell $w={45}><SkypeBadge>S</SkypeBadge></TaskCell>
          <TaskCell $w={46} $active><WordTask /></TaskCell>
        </TaskSide>
        <TaskSide>
          <TaskCell $w={30}><S w={17} h={17}><circle cx="11" cy="4.5" r="3" fill="none" stroke="#fff" /><circle cx="6" cy="8" r="2.6" fill="none" stroke="#fff" /><path d="M1.5 15 Q2 11 6 11 Q10 11 10.5 15 M12 8.5 Q15.5 9 16 12.5" fill="none" stroke="#fff" /></S></TaskCell>
          <Gap $w={5} />
          <TaskCell $w={24}><S w={13} h={8}><path d="M1 7 L6.5 1.5 L12 7" fill="none" stroke="#fff" strokeWidth="1.2" /></S></TaskCell>
          <TaskCell $w={22}><S w={16} h={10}><rect x=".5" y="1" width="13" height="8" fill="none" stroke="#fff" /><rect x="2" y="2.5" width="7" height="5" fill="#fff" /><rect x="14" y="3.5" width="1.5" height="3" fill="#fff" /></S></TaskCell>
          <TaskCell $w={22}><S w={16} h={16}><path d="M14 15 Q13 9 6 8 M14 15 Q12 12 9 11" fill="none" stroke="#777" strokeWidth="1.2" /><path d="M14 15 Q12 6 4 4" fill="none" stroke="#666" /><path d="M3 0 V5 M.5 2.5 H5.5" stroke="#fff" strokeWidth="1.2" /><circle cx="14" cy="14.5" r="1" fill="#fff" /></S></TaskCell>
          <TaskCell $w={22}><S w={16} h={14}><path d="M1 5 H4 L8 1.5 V12.5 L4 9 H1 Z" fill="none" stroke="#fff" /><path d="M10 4.5 Q12 7 10 9.5 M12 2.8 Q15 7 12 11.2" fill="none" stroke="#fff" /></S></TaskCell>
          <Gap $w={6} />
          <TaskCell $w={24}>ع</TaskCell>
          <Gap $w={3} />
          <Clock><span>02:53 م</span><span>6/6/2020</span></Clock>
          <TaskCell $w={38}>
            <NotifyWrap>
              <S w={16} h={14}><path d="M0 0 H16 V10 H6 L3 13 V10 H0 Z" fill="#fff" /><path d="M3 3 H13 M3 6 H13" stroke="#666" /></S>
              <NotifyBadge>٣</NotifyBadge>
            </NotifyWrap>
          </TaskCell>
          <Gap $w={10} />
        </TaskSide>
      </TaskBar>

      <Spotlight />
      <PointerIcon width="13" height="16" viewBox="0 0 13 16"><path d="M1.5 1 V13 L4.5 10.5 L6.8 15 L9 14 L6.8 9.7 L11 9.5 Z" fill="#fff" stroke="#111" strokeWidth="1" /></PointerIcon>
      <NoiseStrip width="3" height="720" viewBox="0 0 3 720">
        {noise.map((n, i) => <rect key={i} x={n.x} y={n.y} width="1.5" height="2" fill={n.c} />)}
        <rect x="0" y="480" width="3" height="203" fill="#fff" />
        <rect x="0" y="683" width="3" height="37" fill="#e9f2dc" />
      </NoiseStrip>
    </Shell>
  );
}
